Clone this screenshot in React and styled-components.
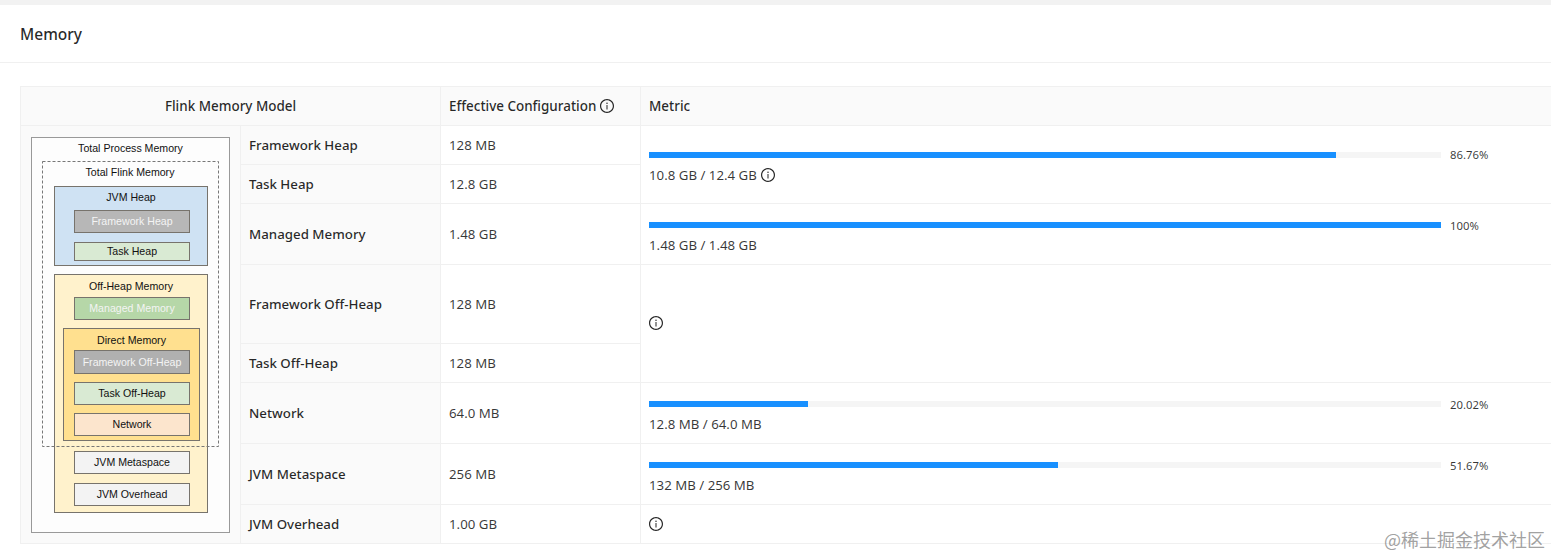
import React from 'react'
import styled, { createGlobalStyle } from 'styled-components'
import { AiOutlineInfoCircle } from 'react-icons/ai'

const GlobalStyle = createGlobalStyle`
  html, body {
    margin: 0;
    background: #fff;
    overflow: hidden;
  }
  body {
    font-family: "Noto Sans", "Open Sans", sans-serif;
    font-size: 14px;
    color: rgba(0, 0, 0, 0.85);
  }
`

const Page = styled.div`
  position: relative;
  height: 556px;
  overflow: hidden;
  border-top: 5px solid #f2f2f2;
  box-sizing: border-box;
`

const CardHeader = styled.div`
  display: flex;
  align-items: center;
  height: 58px;
  padding-left: 20px;
  box-sizing: border-box;
  border-bottom: 1px solid #f0f0f0;
  font-size: 15.5px;
  font-weight: 500;
`

const CardBody = styled.div`
  padding: 23px 0 0 20px;
`

const Table = styled.table`
  width: calc(100% + 10px);
  table-layout: fixed;
  border-collapse: separate;
  border-spacing: 0;
  border-top: 1px solid #f0f0f0;
  border-left: 1px solid #f0f0f0;
`

const Head = styled.th`
  height: 38px;
  padding: 0 8px;
  background: #fafafa;
  border-bottom: 1px solid #f0f0f0;
  border-right: 1px solid #f0f0f0;
  font-size: 13.45px;
  font-weight: 500;
  text-align: ${(p) => (p.$center ? 'center' : 'left')};
`

const Cell = styled.td`
  padding: 0 8px;
  border-bottom: 1px solid #f0f0f0;
  border-right: 1px solid #f0f0f0;
  vertical-align: middle;
  font-size: 13.25px;
  color: rgba(0, 0, 0, 0.78);
  box-sizing: border-box;
`

const LabelCell = styled(Cell)`
  background: #fafafa;
  font-size: 13.3px;
  font-weight: 500;
  color: rgba(0, 0, 0, 0.85);
`

const MetricCell = styled(Cell)`
  padding-top: 2px;
`

const NoteCell = styled(Cell)`
  padding-bottom: 2px;
`

const ModelCell = styled.td`
  padding: 0;
  background: #fafafa;
  border-bottom: 1px solid #f0f0f0;
  border-right: 1px solid #f0f0f0;
  vertical-align: top;
`

const Row = styled.tr`
  height: ${(p) => p.$height}px;
`

const InfoIcon = styled(AiOutlineInfoCircle)`
  display: ${(p) => (p.$block ? 'block' : 'inline-block')};
  width: 16px;
  height: 16px;
  color: rgba(0, 0, 0, 0.85);
  vertical-align: -3px;
  margin-left: ${(p) => (p.$block ? '-1px' : '3px')};
`

const Progress = styled.div`
  display: grid;
  grid-template-columns: 792px auto;
  column-gap: 9px;
  align-items: center;
  height: 20px;
  font-size: 11.3px;
`

const Track = styled.div`
  height: 6px;
  background: #f5f5f5;
`

const Fill = styled.div`
  height: 100%;
  background: #1890ff;
`

const Usage = styled.div`
  height: 20px;
  line-height: 20px;
  font-size: 13.25px;
`

const Watermark = styled.div`
  position: absolute;
  right: 6px;
  bottom: 5px;
  font-family: "Noto Sans CJK SC", sans-serif;
  font-size: 18px;
  line-height: 24px;
  color: rgba(120, 120, 120, 0.7);
`

const ModelText = styled.text`
  font-family: "Liberation Sans", Arial, sans-serif;
  font-size: 10.6px;
  text-anchor: middle;
`

const boxes = [
  { x: 11, y: 12, w: 198, h: 395, fill: '#fdfdfd', stroke: '#999', title: 'Total Process Memory', ty: 27 },
  { x: 34, y: 61, w: 153, h: 79, fill: '#cfe2f3', title: 'JVM Heap', ty: 76 },
  { x: 54, y: 85, w: 115, h: 22, fill: '#b7b7b7', title: 'Framework Heap', light: true },
  { x: 54, y: 117, w: 115, h: 18, fill: '#d9ead3', title: 'Task Heap' },
  { x: 34, y: 149, w: 153, h: 238, fill: '#fff2cc', title: 'Off-Heap Memory', ty: 165 },
  { x: 54, y: 172, w: 115, h: 22, fill: '#b6d7a8', title: 'Managed Memory', light: true },
  { x: 43, y: 203, w: 136, h: 112, fill: '#ffe08f', title: 'Direct Memory', ty: 219 },
  { x: 54, y: 225, w: 115, h: 23, fill: '#b0b0b0', title: 'Framework Off-Heap', light: true },
  { x: 54, y: 257, w: 115, h: 22, fill: '#d9ead3', title: 'Task Off-Heap' },
  { x: 54, y: 288, w: 115, h: 22, fill: '#fce5cd', title: 'Network' },
  { x: 54, y: 326, w: 115, h: 22, fill: '#f3f3f3', title: 'JVM Metaspace' },
  { x: 54, y: 358, w: 115, h: 22, fill: '#f3f3f3', title: 'JVM Overhead' },
]

function MemoryModel() {
  return (
    <svg width="219" height="417" viewBox="1 1 219 417" style={{ display: 'block' }}>
      {boxes.map((b) => (
        <g key={b.title}>
          <rect x={b.x + 0.5} y={b.y + 0.5} width={b.w} height={b.h} fill={b.fill} stroke={b.stroke || '#77736c'} />
          <ModelText
            x={b.x + b.w / 2 + 0.5}
            y={b.ty || b.y + b.h / 2 + 4}
            fill={b.light ? '#f4f4f4' : '#111'}
          >
            {b.title}
          </ModelText>
        </g>
      ))}
      <rect x="22.5" y="36.5" width="176" height="285" fill="none" stroke="#777" strokeDasharray="3 2" />
      <ModelText x="110" y="51" fill="#111">Total Flink Memory</ModelText>
    </svg>
  )
}

function Metric({ percent, label, usage, info }) {
  return (
    <>
      <Progress>
        <Track><Fill style={{ width: `${percent}%` }} /></Track>
        <span>{label}</span>
      </Progress>
      <Usage>
        {usage}
        {info && <InfoIcon />}
      </Usage>
    </>
  )
}

export default function App() {
  return (
    <Page>
      <GlobalStyle />
      <CardHeader>Memory</CardHeader>
      <CardBody>
        <Table>
          <colgroup>
            <col style={{ width: 220 }} />
            <col style={{ width: 200 }} />
            <col style={{ width: 200 }} />
            <col />
          </colgroup>
          <thead>
            <tr>
              <Head colSpan={2} $center>Flink Memory Model</Head>
              <Head>Effective Configuration<InfoIcon /></Head>
              <Head>Metric</Head>
            </tr>
          </thead>
          <tbody>
            <Row $height={39}>
              <ModelCell rowSpan={8}><MemoryModel /></ModelCell>
              <LabelCell>Framework Heap</LabelCell>
              <Cell>128 MB</Cell>
              <Cell rowSpan={2}>
                <Metric percent={86.76} label="86.76%" usage="10.8 GB / 12.4 GB" info />
              </Cell>
            </Row>
            <Row $height={39}>
              <LabelCell>Task Heap</LabelCell>
              <Cell>12.8 GB</Cell>
            </Row>
            <Row $height={61}>
              <LabelCell>Managed Memory</LabelCell>
              <Cell>1.48 GB</Cell>
              <MetricCell><Metric percent={100} label="100%" usage="1.48 GB / 1.48 GB" /></MetricCell>
            </Row>
            <Row $height={79}>
              <LabelCell>Framework Off-Heap</LabelCell>
              <Cell>128 MB</Cell>
              <NoteCell rowSpan={2}><InfoIcon $block /></NoteCell>
            </Row>
            <Row $height={39}>
              <LabelCell>Task Off-Heap</LabelCell>
              <Cell>128 MB</Cell>
            </Row>
            <Row $height={61}>
              <LabelCell>Network</LabelCell>
              <Cell>64.0 MB</Cell>
              <MetricCell><Metric percent={20.02} label="20.02%" usage="12.8 MB / 64.0 MB" /></MetricCell>
            </Row>
            <Row $height={61}>
              <LabelCell>JVM Metaspace</LabelCell>
              <Cell>256 MB</Cell>
              <MetricCell><Metric percent={51.67} label="51.67%" usage="132 MB / 256 MB" /></MetricCell>
            </Row>
            <Row $height={39}>
              <LabelCell>JVM Overhead</LabelCell>
              <Cell>1.00 GB</Cell>
              <Cell><InfoIcon $block /></Cell>
            </Row>
          </tbody>
        </Table>
      </CardBody>
      <Watermark>@稀土掘金技术社区</Watermark>
    </Page>
  )
}
